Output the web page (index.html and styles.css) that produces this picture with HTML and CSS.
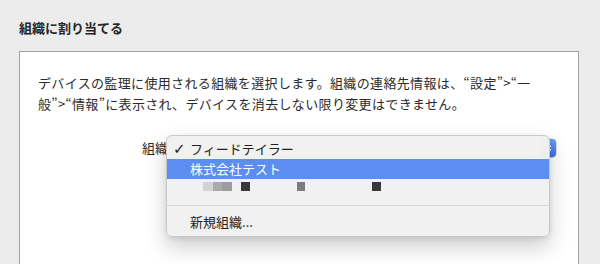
FILE: index.html
```html
<!DOCTYPE html>
<html lang="ja">
<head>
    <meta charset="UTF-8">
    <meta name="viewport" content="width=device-width, initial-scale=1.0">
    <title>組織に割り当てる</title>
    <link rel="stylesheet" href="styles.css">
</head>
<body>
    <h2 class="section-title">組織に割り当てる</h2>

    <div class="panel">
        <p class="desc">デバイスの監理に使用される組織を選択します。組織の連絡先情報は、“設定”>“一<br>般”>“情報”に表示され、デバイスを消去しない限り変更はできません。</p>

        <div class="form-row">
            <span class="form-label">組織</span>
            <div class="popup is-open">
                <div class="popup-btn">
                    <span class="popup-value">フィードテイラー</span>
                    <span class="popup-arrows">
                        <svg width="8" height="12" viewBox="0 0 8 12">
                            <path d="M1.5 4.5 L4 2 L6.5 4.5 M1.5 7.5 L4 10 L6.5 7.5" fill="none" stroke="#fff" stroke-width="1.4" stroke-linecap="round" stroke-linejoin="round"/>
                        </svg>
                    </span>
                </div>

                <!-- 開いているポップアップメニュー -->
                <ul class="menu">
                    <li class="menu-item"><span class="check">✓</span>フィードテイラー</li>
                    <li class="menu-item active">株式会社テスト</li>
                    <li class="menu-item redacted">
                        <span class="px px-light"></span><span class="px px-mid"></span><span class="px px-mid2"></span>
                        <span class="px px-dark gap-a"></span>
                        <span class="px px-gray gap-b"></span>
                        <span class="px px-dark gap-c"></span>
                    </li>
                    <li class="menu-sep"></li>
                    <li class="menu-item">新規組織...</li>
                </ul>
            </div>
        </div>
    </div>
</body>
</html>
```

FILE: styles.css
```css
body {
    margin: 0;
    padding: 19px 21px 0 19px;
    background-color: #ececec;
    font-family: "Noto Sans CJK JP", "Liberation Sans", sans-serif;
    color: #2a2a2a;
    overflow: hidden;
}

.section-title {
    font-size: 13px;
    font-weight: bold;
    line-height: 18px;
    margin: 0 0 14px;
    color: #262626;
}

.panel {
    width: 522px;
    min-height: 300px;
    background-color: #ffffff;
    border: 1px solid #a3a3a3;
    border-bottom: none;
    padding: 20px 18px 0;
}

.desc {
    font-size: 13px;
    line-height: 21px;
    letter-spacing: 0.35px;
    margin: 0;
    color: #2b2b2b;
}

.form-row {
    display: flex;
    align-items: center;
    margin-top: 25px;
    padding-left: 104px;
}

.form-label {
    font-size: 13px;
    line-height: 18px;
    margin-right: 4px;
    color: #2b2b2b;
}

.popup {
    position: relative;
    width: 384px;
}

.popup-btn {
    height: 18px;
    display: flex;
    justify-content: space-between;
    align-items: center;
    background-color: #ffffff;
    border-radius: 4px;
    box-shadow: 0 0 0 0.5px rgba(0, 0, 0, 0.25), 0 1px 1px rgba(0, 0, 0, 0.12);
    font-size: 13px;
}

.popup-value {
    padding-left: 8px;
}

/* メニューが開いている間はボタンの値はメニュー項目に隠れる */
.popup.is-open .popup-value {
    visibility: hidden;
}

.popup-arrows {
    width: 16px;
    height: 18px;
    display: flex;
    align-items: center;
    justify-content: center;
    border-radius: 0 4px 4px 0;
    background: linear-gradient(#6a9ef6, #3a70e4);
}

.menu {
    position: absolute;
    left: -6px;
    top: -4px;
    box-sizing: border-box;
    width: 384px;
    margin: 0;
    padding: 3px 0 4px;
    list-style: none;
    background-color: rgba(241, 241, 241, 0.98);
    border: 1px solid #c8c8c8;
    border-radius: 6px;
    box-shadow: 0 10px 22px rgba(0, 0, 0, 0.2), 0 2px 4px rgba(0, 0, 0, 0.08);
}

.menu-item {
    position: relative;
    height: 20px;
    line-height: 20px;
    padding-left: 23px;
    font-size: 13px;
    color: #222222;
}

.menu-item.active {
    background-color: #5b8ef0;
    color: #ffffff;
}

.check {
    position: absolute;
    left: 6px;
    top: 0;
    font-family: "DejaVu Sans", sans-serif;
    font-size: 15px;
    line-height: 20px;
}

.redacted {
    display: flex;
    align-items: flex-start;
    padding-left: 36px;
    padding-top: 3px;
    box-sizing: border-box;
}

.px {
    display: block;
    width: 9px;
    height: 9px;
}

.px-light {
    width: 10px;
    background-color: #d3d3d3;
}

.px-mid {
    background-color: #ababab;
}

.px-mid2 {
    width: 10px;
    background-color: #9d9d9d;
}

.px-dark {
    background-color: #383838;
}

.px-gray {
    width: 8px;
    background-color: #7d7d7d;
}

.gap-a {
    margin-left: 9px;
}

.gap-b {
    margin-left: 47px;
}

.gap-c {
    margin-left: 67px;
}

.menu-sep {
    height: 1px;
    margin: 6px 0;
    background-color: #d6d6d6;
}
```
